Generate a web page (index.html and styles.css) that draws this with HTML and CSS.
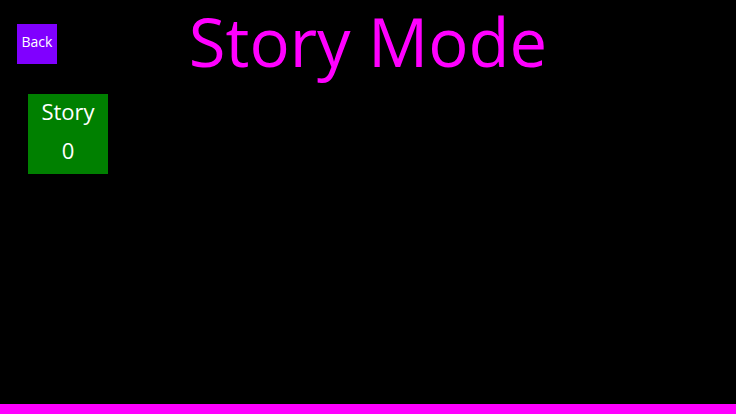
FILE: index.html
```html
<!DOCTYPE html>
<html>
<head>
<meta charset="utf-8">
<link rel="stylesheet" href="styles.css">
</head>
<body>
<div class="screen">
  <header class="top">
    <div class="left"><button class="back">Back</button></div>
    <h1 class="title">Story Mode</h1>
    <div class="right"></div>
  </header>
  <main class="content">
    <div class="card">
      <div class="card-name">Story</div>
      <div class="card-value">0</div>
    </div>
  </main>
  <footer class="bar"></footer>
</div>
</body>
</html>
```

FILE: styles.css
```css
html, body {
  margin: 0;
  padding: 0;
  background: #000;
}
.screen {
  display: flex;
  flex-direction: column;
  height: 414px;
  font-family: "Open Sans", sans-serif;
  color: #fff;
}
.top {
  display: grid;
  grid-template-columns: 1fr auto 1fr;
  align-items: start;
  height: 94px;
}
.left {
  padding: 24px 0 0 17px;
}
.back {
  display: block;
  width: 40px;
  height: 40px;
  border: 0;
  padding: 0 0 6px;
  background: #8000ff;
  color: #fff;
  font-family: inherit;
  font-size: 14px;
  line-height: 19px;
}
.title {
  margin: 0;
  font-size: 67px;
  font-weight: normal;
  line-height: 82.6px;
  color: #ff00ff;
}
.content {
  flex: 1;
  padding-left: 28px;
}
.card {
  width: 80px;
  height: 80px;
  background: #008000;
  display: flex;
  flex-direction: column;
  align-items: center;
  padding-top: 2px;
  box-sizing: border-box;
}
.card-name {
  font-size: 22px;
  line-height: 30px;
}
.card-value {
  margin-top: 8.5px;
  font-size: 22px;
  line-height: 30px;
}
.bar {
  height: 10px;
  background: #ff00ff;
}
```
